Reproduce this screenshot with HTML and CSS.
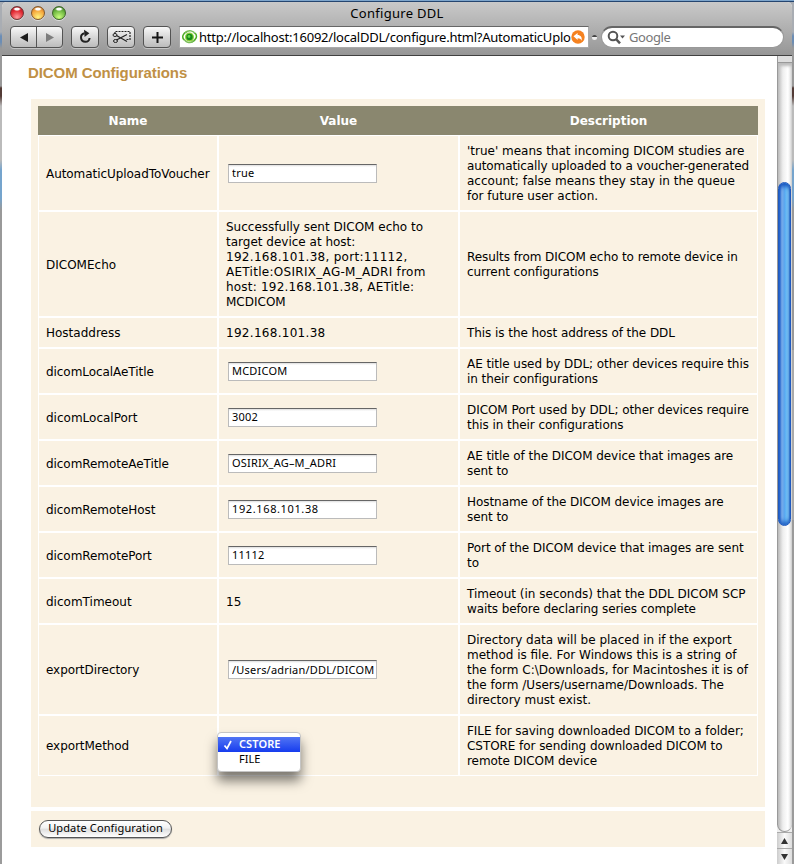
FILE: index.html
```html
<!DOCTYPE html>
<html lang="en">
<head>
<meta charset="utf-8">
<title>Configure DDL</title>
<link rel="stylesheet" href="styles.css">
</head>
<body>
<div class="window">
  <header class="chrome">
    <div class="titlebar">
      <div class="lights"><i class="light red"></i><i class="light amber"></i><i class="light green"></i></div>
      <div class="title">Configure DDL</div>
    </div>
    <div class="toolbar">
      <div class="nav">
        <div class="half"><svg width="26" height="20"><path d="M9 10.5 17 6v9z" fill="#1c1c1c"/></svg></div>
        <div class="half"><svg width="26" height="20"><path d="M17 10.5 9 6v9z" fill="#7d7d7d"/></svg></div>
      </div>
      <div class="btn"><svg width="26" height="20"><path d="M12.5 6.3A4.3 4.3 0 1 0 17.6 11" fill="none" stroke="#222" stroke-width="2"/><path d="M12 2.8 17.4 6.2 12.6 10z" fill="#222"/></svg></div>
      <div class="btn"><svg width="26" height="20" fill="none" stroke="#222"><path d="M7 7V4.5h15v8h-4" stroke-dasharray="2 1" stroke-width="1.2"/><path d="M8.500 8.500 19 14.500M8.500 13 19 7.500" stroke-width="1.200"/><ellipse cx="7" cy="8" rx="2" ry="1.500"/><ellipse cx="7.500" cy="14" rx="2" ry="1.500"/></svg></div>
      <div class="btn"><svg width="26" height="20"><path d="M8 10.500h11M13.500 5v11" stroke="#151515" stroke-width="2"/></svg></div>
      <div class="address">
        <svg class="favicon" width="17" height="16"><g fill="none" stroke="#4cad22" stroke-width="1.500"><path d="M3 11C.5 8 2 4 6 2.500M14 4c3 3 1 7-3 9"/><path d="M4 4c4-4 9-2 10 1M13 11c-3 4-8 3-10-1" stroke="#79bd59"/></g><circle cx="8.500" cy="8" r="4.500" fill="#8ed23c"/><circle cx="8.500" cy="8" r="3.200" fill="#168b19"/><circle cx="8" cy="7.500" r="1.400" fill="#65d34a"/></svg>
        <span class="url">http://localhost:16092/localDDL/configure.html?AutomaticUplo</span>
        <svg class="snap" width="14" height="14"><circle cx="7" cy="7" r="6.700" fill="#f58220"/><path d="M2.500 6.300 6.600 2.900v2c3 .1 4.700 2 4 5.800-.8-1.700-1.800-2.400-4-2.400v1.800z" fill="#fff"/></svg>
      </div>
      <i class="grip"></i>
      <div class="search">
        <svg width="20" height="18"><circle cx="7" cy="7" r="4.300" fill="none" stroke="#555" stroke-width="2"/><path d="m10 10 4 4.300" stroke="#555" stroke-width="2.500"/><path d="M14 6.500h5l-2.500 3z" fill="#555"/></svg>
        <span>Google</span>
      </div>
    </div>
  </header>
  <div class="viewport">
    <main class="page">
      <h1>DICOM Configurations</h1>
      <section class="panel">
        <table>
          <colgroup><col class="c-name"><col class="c-value"><col class="c-desc"></colgroup>
          <thead><tr><th>Name</th><th>Value</th><th>Description</th></tr></thead>
          <tbody>
            <tr><td class="tight">AutomaticUploadToVoucher</td><td><input value="true"></td><td>'true' means that incoming DICOM studies are<br><span class="tight">automatically uploaded to a voucher-generated</span><br>account; false means they stay in the queue<br>for future user action.</td></tr>
            <tr><td>DICOMEcho</td><td>Successfully sent DICOM echo to<br>target device at host:<br><span class="wide">192.168.101.38, port:11112,</span><br><span class="wide">AETitle:OSIRIX_AG-M_ADRI from</span><br><span class="loose">host: 192.168.101.38, AETitle:</span><br>MCDICOM</td><td class="tight">Results from DICOM echo to remote device in<br>current configurations</td></tr>
            <tr><td>Hostaddress</td><td class="wide">192.168.101.38</td><td class="tight">This is the host address of the DDL</td></tr>
            <tr><td class="tight">dicomLocalAeTitle</td><td><input value="MCDICOM"></td><td class="tight">AE title used by DDL; other devices require this<br>in their configurations</td></tr>
            <tr><td>dicomLocalPort</td><td><input value="3002"></td><td class="tight">DICOM Port used by DDL; other devices require<br>this in their configurations</td></tr>
            <tr><td class="tight">dicomRemoteAeTitle</td><td><input value="OSIRIX_AG–M_ADRI"></td><td class="tight">AE title of the DICOM device that images are<br>sent to</td></tr>
            <tr><td class="tight">dicomRemoteHost</td><td><input class="digits" value="192.168.101.38"></td><td class="tight">Hostname of the DICOM device images are<br>sent to</td></tr>
            <tr><td class="tight">dicomRemotePort</td><td><input value="11112"></td><td class="tight">Port of the DICOM device that images are sent<br>to</td></tr>
            <tr><td>dicomTimeout</td><td>15</td><td>Timeout (in seconds) that the DDL DICOM SCP<br><span class="tight">waits before declaring series complete</span></td></tr>
            <tr><td class="tight">exportDirectory</td><td><input value="/Users/adrian/DDL/DICOM"></td><td>Directory data will be placed in if the export<br>method is file. For Windows this is a string of<br>the form C:\Downloads, for Macintoshes it is of<br>the form /Users/username/Downloads. The<br>directory must exist.</td></tr>
            <tr><td class="tight">exportMethod</td><td class="select-cell"><div class="menu"><div class="option selected"><svg width="10" height="10"><path d="M1.500 5.500 4 8.500 8 1" fill="none" stroke="#fff" stroke-width="1.700"/></svg>CSTORE</div><div class="option">FILE</div></div></td><td class="tight">FILE for saving downloaded DICOM to a folder;<br>CSTORE for sending downloaded DICOM to<br>remote DICOM device</td></tr>
          </tbody>
        </table>
      </section>
      <section class="actions"><button>Update Configuration</button></section>
    </main>
    <aside class="scrollbar">
      <div class="track"><div class="thumb"></div></div>
      <div class="arrow"><svg width="15" height="16"><path d="M4 11 7.500 5 11 11z" fill="#333"/></svg></div>
      <div class="arrow"><svg width="15" height="16"><path d="M4 5h7l-3.500 6z" fill="#333"/></svg></div>
    </aside>
  </div>
</div>
</body>
</html>
```
FILE: styles.css
```css
* { box-sizing: border-box; }
body {
  margin: 0;
  width: 794px;
  height: 864px;
  overflow: hidden;
  padding: 2px 2px 0;
  background: linear-gradient(#7da5cc 0 1px, #25456f 1px 2px, #a9adb3 2px 32px, #6b8db5 36px 42px, #999 48px 86px, #533b36 88px 96px, #bbb 106px 160px, #75a4cd 170px 198px, #999 210px 350px, #aaa 350px 520px, #9b9b9b 520px);
  font-family: "DejaVu Sans", sans-serif;
  color: #000;
}
.window {
  height: 862px;
  display: flex;
  flex-direction: column;
  border-radius: 5px 5px 0 0;
  overflow: hidden;
  background: #fff;
}
.chrome {
  height: 54px;
  flex: none;
  background: linear-gradient(#c9c9c9, #969696);
  border-bottom: 1px solid #404040;
  font-family: "Noto Sans", sans-serif;
}
.titlebar {
  height: 24px;
  display: grid;
  grid-template-columns: 88px 1fr 88px;
  align-items: center;
}
.lights { display: flex; gap: 7px; padding: 0 0 2px 8px; }
.light {
  width: 14px;
  height: 14px;
  border-radius: 50%;
  border: 1px solid #6d3434;
  box-shadow: 0 1px 0 #ddd;
}
.red { background: radial-gradient(ellipse 4px 2px at 50% 17%, #fff 50%, transparent), radial-gradient(circle at 50% 85%, #ff9b9b, #e22c35 55%, #a40b16); }
.amber { border-color: #81582c; background: radial-gradient(ellipse 4px 2px at 50% 17%, #fff 50%, transparent), radial-gradient(circle at 50% 85%, #fff47f, #f4a43b 60%, #b35e16); }
.green { border-color: #3c6428; background: radial-gradient(ellipse 4px 2px at 50% 17%, #fff 50%, transparent), radial-gradient(circle at 50% 85%, #caff7e, #6bb43f 60%, #2b6b17); }
.title { text-align: center; font-size: 13px; line-height: 20px; padding-bottom: 2px; letter-spacing: .3px; }
.toolbar { display: flex; padding-left: 8px; }
.btn, .nav {
  height: 22px;
  border: 1px solid #535353;
  border-radius: 4px;
  background: linear-gradient(#f8f8f8, #d5d5d5 55%, #bcbcbc);
  box-shadow: 0 1px 0 #c4c4c4;
}
.btn { width: 28px; margin-right: 8px; }
.nav { display: flex; width: 53px; margin-right: 8px; }
.half + .half { border-left: 1px solid #555; }
.half { width: 26px; overflow: hidden; }
.toolbar svg { display: block; flex: none; }
.address {
  display: flex;
  align-items: center;
  width: 410px;
  height: 22px;
  background: #fff;
  border: 1px solid #aaa;
  border-top-color: #666;
}
.favicon { margin-left: 1px; }
.url {
  width: 372px;
  margin-left: 1px;
  overflow: hidden;
  white-space: nowrap;
  font-size: 13px;
  line-height: 20px;
  letter-spacing: -.22px;
}
.grip { width: 5px; height: 5px; margin: 9px 4px 0 3px; border-radius: 3px; background: linear-gradient(#444 50%, #eee 50%); }
.search {
  display: flex;
  align-items: center;
  width: 183px;
  height: 22px;
  padding-left: 4px;
  border: 1px solid #999;
  border-top: 2px solid #666;
  border-radius: 11px;
  background: #fff;
  color: #777;
  font-size: 13px;
}
.search span { margin-left: 3px; padding-bottom: 2px; letter-spacing: -.4px; }
.viewport { display: flex; height: 808px; }
.page { width: 775px; padding: 7px 12px 0 29px; }
h1 {
  margin: 0 0 16px -3px;
  height: 20px;
  font: bold 15px/20px "Liberation Sans", sans-serif;
  letter-spacing: -.08px;
  color: #c09045;
}
.panel { width: 734px; height: 708px; padding: 7px; background: #faf2e3; }
table { width: 720px; table-layout: fixed; border-spacing: 0; font-size: 12px; line-height: 15px; }
.c-name { width: 180px; }
.c-value { width: 241px; }
.c-desc { width: 299px; }
th {
  height: 29px;
  padding: 2px 0 0;
  background: #8a876f;
  color: #fff;
  font: bold 12px/27px "DejaVu Sans", sans-serif;
}
td { padding: 8px 7px 6px; border: 1px solid #fff; vertical-align: middle; white-space: nowrap; }
.tight { letter-spacing: -.06px; }
span.tight { letter-spacing: -.1px; }
.wide { letter-spacing: .29px; }
.loose { letter-spacing: .2px; }
input {
  display: block;
  width: 149px;
  height: 19px;
  margin: -3px 0 -1px 2px;
  padding: 0 2px 1px 3px;
  border: 1px solid #bbb;
  border-top: 1px solid #666;
  border-radius: 0;
  background: linear-gradient(#ddd, #fff 2px);
  font: 11px/15px "Noto Sans", sans-serif;
  letter-spacing: .2px;
  color: #000;
}
.digits { letter-spacing: .62px; }
.select-cell { position: relative; }
.menu {
  position: absolute;
  left: -2px;
  top: 16px;
  width: 84px;
  height: 40px;
  padding-top: 4px;
  border: 1px solid #c5c5c5;
  border-radius: 4px;
  background: #fff;
  box-shadow: 0 9px 12px rgba(0, 0, 0, .5);
  font: 11px/14px "Noto Sans", sans-serif;
}
.option { height: 15px; padding-left: 21px; position: relative; }
.option svg { position: absolute; left: 5px; top: 3px; }
.selected { background: linear-gradient(#5175f4, #163cee); color: #fff; font-weight: 600; letter-spacing: .1px; }
.actions { width: 734px; height: 36px; margin-top: 4px; padding: 9px 8px; background: #faf2e3; }
button {
  display: block;
  width: 133px;
  height: 18px;
  padding: 0 0 2px;
  border: 1px solid #555;
  border-radius: 9px;
  background: linear-gradient(#fff, #f2f2f2 45%, #dedede 50%, #fff);
  box-shadow: 0 1px 1px #aaa;
  font: 11px/14px "Noto Sans", sans-serif;
  letter-spacing: .13px;
  color: #000;
}
.scrollbar { width: 15px; height: 808px; background: #eee; }
.track {
  height: 776px;
  padding-top: 126px;
  border: solid #999;
  border-width: 0 0 1px 1px;
  border-radius: 0 0 8px 8px;
  background: linear-gradient(90deg, #bbb, #eee 35%, #fff 70%, #ddd);
  box-shadow: inset 0 6px 0 #ddd, inset 0 7px 0 #999, inset 0 10px 3px #bbb;
}
.thumb {
  width: 13px;
  height: 344px;
  border: 1px solid #2059bd;
  border-radius: 7px;
  background: linear-gradient(90deg, #2868d8, #8abaf0 25%, #5ba4ed 48%, #62b8f6 60%, #a2e5ff 90%, #387fc9);
  box-shadow: inset 0 3px 4px #1554be, inset 0 -3px 4px #2566c7;
}
.arrow { height: 16px; border-top: 1px solid #aaa; background: linear-gradient(90deg, #ccc, #fafafa 50%, #ddd); }
.arrow svg { display: block; }
```
